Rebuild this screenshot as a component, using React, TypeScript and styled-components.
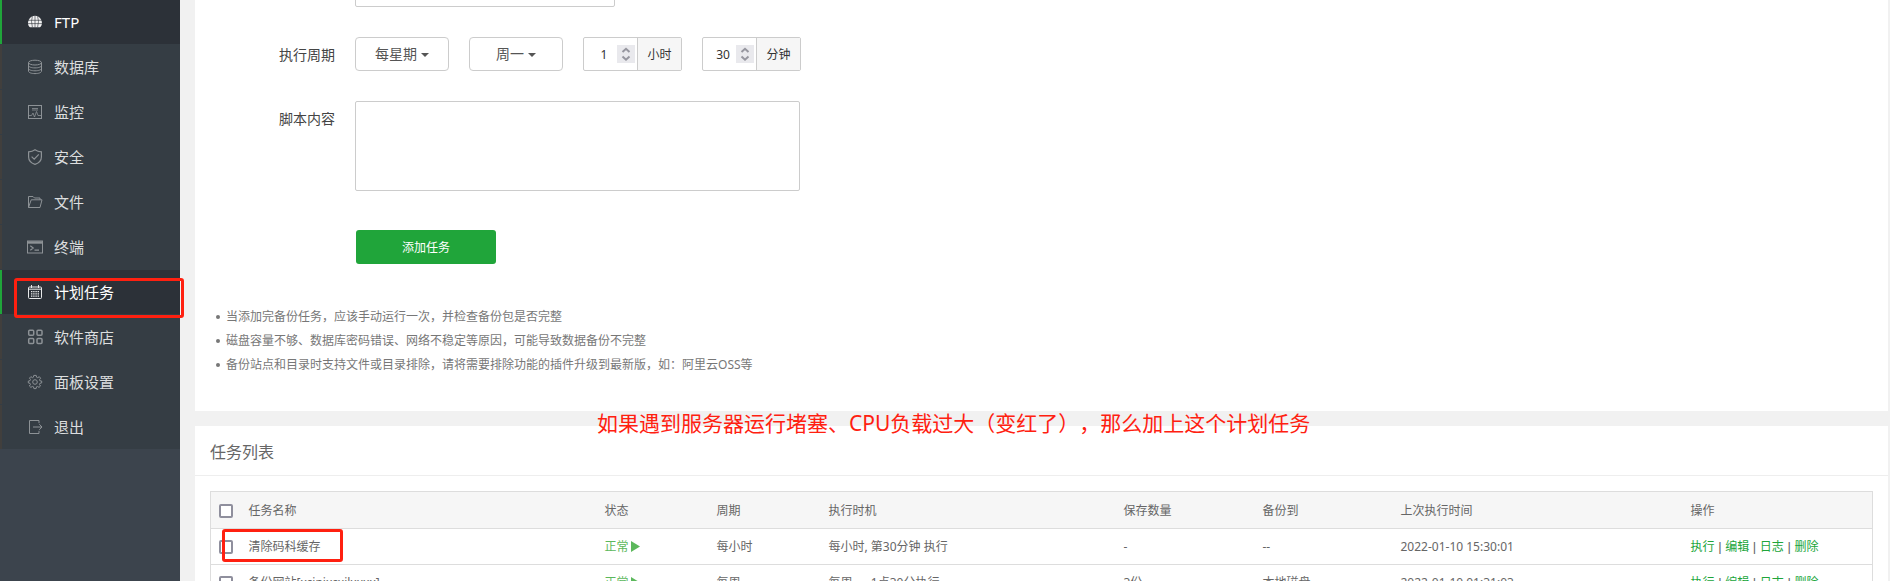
import React from "react";
import styled, { createGlobalStyle } from "styled-components";

const GlobalStyle = createGlobalStyle`
  * { box-sizing: border-box; }
  body {
    margin: 0;
    background: #f1f1f1;
    color: #666;
    font: 12px/18px "Noto Sans", "Noto Sans CJK SC", sans-serif;
    text-spacing-trim: space-all;
  }
  input, select, textarea, button { font: inherit; color: inherit; }
`;

const Layout = styled.div`
  display: flex;
  height: 100vh;
  overflow: hidden;
`;

const Sidebar = styled.aside`
  position: relative;
  z-index: 1;
  flex: 0 0 180px;
  background: #3c444d;
`;

const Nav = styled.nav`
  display: flex;
  flex-direction: column;
  gap: 1px;
  background: #353d44;
`;

const NavLink = styled.a<{ $active?: boolean }>`
  position: relative;
  display: flex;
  align-items: center;
  gap: 11px;
  height: 44px;
  padding-left: 25px;
  border-left: 2px solid ${(p) => (p.$active ? "#20a53a" : "#413f3d")};
  background: ${(p) => (p.$active ? "#2c3138" : "transparent")};
  color: ${(p) => (p.$active ? "#fff" : "#dcdedf")};
  font-size: 15px;
  line-height: 22px;
  text-decoration: none;
`;

const IconSvg = styled.svg<{ $bright?: boolean }>`
  flex: none;
  width: 16px;
  height: 16px;
  fill: none;
  stroke: ${(p) => (p.$bright ? "#e8e9ea" : "#8d9296")};
  stroke-width: 1;
`;

const Highlight = styled.span<{ $area: "nav" | "cell" }>`
  position: absolute;
  z-index: 2;
  top: ${(p) => (p.$area === "nav" ? 8 : 0)}px;
  left: ${(p) => (p.$area === "nav" ? 12 : -19)}px;
  width: ${(p) => (p.$area === "nav" ? 170 : 121)}px;
  height: ${(p) => (p.$area === "nav" ? 40 : 33)}px;
  border: 3px solid #ff2010;
  border-radius: 3px;
  pointer-events: none;
`;

const Main = styled.main`
  flex: 1;
  min-width: 0;
  display: flex;
  flex-direction: column;
  gap: 15px;
  padding: 0 2px 0 15px;
`;

const Panel = styled.section`
  position: relative;
  flex: none;
  background: #fff;
`;

const Form = styled.form`
  display: flex;
  flex-direction: column;
  gap: 30px;
  margin-top: -27px;
`;

const FormRow = styled.div`
  display: flex;
  align-items: flex-start;
  gap: 20px;
`;

const RowLabel = styled.label`
  width: 140px;
  color: #444;
  font-size: 14px;
  line-height: 36px;
  height: 34px;
  text-align: right;
`;

const TextInput = styled.input`
  width: 260px;
  height: 34px;
  padding: 0 10px;
  border: 1px solid #ccc;
  border-radius: 2px;
`;

const SelectBox = styled.label`
  display: flex;
  align-items: center;
  justify-content: center;
  gap: 4px;
  width: 94px;
  height: 34px;
  border: 1px solid #ccc;
  border-radius: 4px;
  background: #fff;
  color: #555;
`;

const Select = styled.select`
  appearance: none;
  field-sizing: content;
  padding: 0;
  border: 0;
  background: none;
  font-size: 14px;
  line-height: 20px;
`;

const Caret = styled.span`
  margin-top: 2px;
  border: 4px solid transparent;
  border-top-color: currentColor;
  border-bottom: 0;
`;

const NumberGroup = styled.label`
  display: flex;
  align-items: center;
  width: 99px;
  height: 34px;
  border: 1px solid #ccc;
  border-radius: 2px;
  color: #333;
`;

const NumberInput = styled.input`
  appearance: textfield;
  width: 33px;
  height: 32px;
  padding: 0 0 0 7px;
  border: 0;
  background: none;
  text-align: center;
  &::-webkit-inner-spin-button { display: none; }
`;

const Stepper = styled.svg`
  width: 18px;
  height: 18px;
  margin-right: 2px;
  background: #e9e9ed;
  fill: none;
  stroke: #96969f;
  stroke-width: 2;
`;

const Unit = styled.span`
  flex: 1;
  height: 32px;
  border-left: 1px solid #ccc;
  background: #f6f6f6;
  line-height: 34px;
  text-align: center;
`;

const ScriptArea = styled.textarea`
  display: block;
  width: 445px;
  height: 90px;
  padding: 8px 10px;
  border: 1px solid #ccc;
  border-radius: 2px;
  resize: none;
`;

const SubmitButton = styled.button`
  width: 140px;
  height: 34px;
  margin: 9px 0 0 161px;
  padding: 2px 0 0;
  border: 0;
  border-radius: 3px;
  background: #20a53a;
  color: #fff;
`;

const Tips = styled.ul`
  margin: 0;
  padding: 41px 0 34px 31px;
  color: #777;
  line-height: 24px;
  list-style: none;
`;

const Tip = styled.li`
  display: flex;
  align-items: center;
  &::before {
    content: "";
    width: 4px;
    height: 4px;
    margin: 0 6px 0 -10px;
    border-radius: 50%;
    background: #777;
  }
`;

const PanelTitle = styled.h2`
  margin: 0;
  padding: 14px 15px 11px;
  border-bottom: 1px solid #eee;
  font-size: 16px;
  font-weight: 400;
  line-height: 24px;
`;

const Annotation = styled.p`
  position: absolute;
  top: -17px;
  left: 402px;
  margin: 0;
  color: #ff2010;
  font-size: 21px;
  line-height: 28px;
  white-space: nowrap;
`;

const TableWrap = styled.div`
  padding: 15px;
`;

const Table = styled.table`
  width: 100%;
  table-layout: fixed;
  border-collapse: collapse;
  border: 1px solid #ddd;
`;

const Column = styled.col<{ $width?: number }>`
  width: ${(p) => (p.$width ? `${p.$width}px` : "auto")};
`;

const HeadCell = styled.th`
  height: 37px;
  padding: 2px 8px 0;
  background: #f6f6f6;
  font-weight: 400;
  text-align: left;
`;

const Cell = styled.td`
  position: relative;
  height: 36px;
  padding: 0 8px;
  border-top: 1px solid #ddd;
  white-space: nowrap;
`;

const CheckBox = styled.input`
  appearance: none;
  display: block;
  width: 14px;
  height: 14px;
  margin: 0;
  border: 2px solid #8f8f9d;
  border-radius: 2px;
  background: #fff;
`;

const Status = styled.span`
  display: flex;
  align-items: center;
  gap: 2px;
  color: #5cb85c;
`;

const PlayMark = styled.svg`
  width: 9px;
  height: 11px;
  fill: currentColor;
`;

const ActionLink = styled.a`
  color: #20a53a;
  text-decoration: none;
  & + &::before {
    content: " | ";
    color: #666;
    font-family: "Liberation Sans", sans-serif;
    font-size: 13px;
    white-space: pre;
  }
`;

const icons: Record<string, React.ReactNode> = {
  ftp: (
    <>
      <path d="M3 13.2C.4 11.4 .6 7.4 2.4 4.8C5 .6 11 .6 13.6 4.8C15.4 7.4 15.6 11.4 13 13.2Z" fill="#f0f0f1" stroke="none" />
      <path d="M1 6.3H15M1 9.6H15M8 1.5V13.2M5.4 2.3Q3.6 7 5.4 13.2M10.6 2.3Q12.4 7 10.6 13.2" stroke="#2c3138" strokeWidth="0.6" />
    </>
  ),
  database: (
    <>
      <ellipse cx="8" cy="3.6" rx="6.5" ry="2.4" />
      <path d="M1.5 3.6V12.2C1.5 13.6 4.4 14.6 8 14.6S14.5 13.6 14.5 12.2V3.6M1.5 6.5C1.5 7.9 4.4 8.9 8 8.9S14.5 7.9 14.5 6.5M1.5 9.4C1.5 10.8 4.4 11.8 8 11.8S14.5 10.8 14.5 9.4" />
    </>
  ),
  monitor: (
    <>
      <rect x="1.5" y="1.5" width="13" height="13" />
      <path d="M5 4.5H11M5 6H11M2 11.5H4.5L6 9L7.5 13L9.5 7.5L11 11.5H14" strokeWidth="0.8" />
    </>
  ),
  shield: <path d="M8 .8C6 2.3 4 2.8 1.6 2.8V8C1.6 11.6 4.4 14.2 8 15.4C11.6 14.2 14.4 11.6 14.4 8V2.8C12 2.8 10 2.3 8 .8ZM4.6 7.6L7.2 10.2L11.8 5.4" strokeWidth="1.2" />,
  folder: <path d="M1.5 13.5V2.5H6L7.5 4H13V5.8M1.5 13.5L4.2 5.8H15L13 13.5Z" />,
  terminal: (
    <>
      <rect x=".5" y="2" width="15" height="12" />
      <path d="M.5 3.5H15.5" strokeWidth="2.4" />
      <path d="M3.3 6.8L6.2 9L3.3 11.2M7.5 11.2H12" strokeWidth="1.2" />
    </>
  ),
  calendar: (
    <>
      <rect x="1.5" y="3" width="13" height="11.5" rx="1" />
      <path d="M1.5 5.2H14.5M4.5 1V4M11.5 1V4" />
      <path d="M4 7.7H12.2M4 9.9H12.2M4 12.1H12.2" strokeWidth="1.2" strokeDasharray="1.4 .8" />
    </>
  ),
  store: (
    <g strokeWidth="1.5">
      <rect x="1.7" y="1.2" width="5" height="5" rx="1" />
      <rect x="10" y="1.2" width="5" height="5" rx="1" />
      <rect x="1.7" y="9.5" width="5" height="5" rx="1" />
      <rect x="10" y="9.5" width="5" height="5" rx="1" />
    </g>
  ),
  settings: (
    <>
      <path d="M6.8 1.4H9.2L9.6 3.2L10.7 3.7L12.3 2.7L13.6 4.2L12.5 5.7L12.9 6.8L14.7 7.1V8.9L12.9 9.3L12.4 10.4L13.5 12L12 13.4L10.5 12.4L9.5 12.8L9.1 14.6H6.9L6.5 12.8L5.4 12.4L3.9 13.4L2.4 12L3.5 10.4L3 9.3L1.3 8.9V7.1L3 6.7L3.5 5.6L2.5 4.1L3.9 2.6L5.4 3.7L6.4 3.2Z" />
      <circle cx="8" cy="8" r="2.3" />
    </>
  ),
  exit: <path d="M12 4.2V1.5H2.5V14.5H12V11.8M6 8H15M12.3 5.2L15 8L12.3 10.8" />,
};

const navItems = [
  { icon: "ftp", label: "FTP", active: true },
  { icon: "database", label: "数据库" },
  { icon: "monitor", label: "监控" },
  { icon: "shield", label: "安全" },
  { icon: "folder", label: "文件" },
  { icon: "terminal", label: "终端" },
  { icon: "calendar", label: "计划任务", active: true, marked: true },
  { icon: "store", label: "软件商店" },
  { icon: "settings", label: "面板设置" },
  { icon: "exit", label: "退出" },
];

const tips = [
  "当添加完备份任务，应该手动运行一次，并检查备份包是否完整",
  "磁盘容量不够、数据库密码错误、网络不稳定等原因，可能导致数据备份不完整",
  "备份站点和目录时支持文件或目录排除，请将需要排除功能的插件升级到最新版，如：阿里云OSS等",
];

const columns: { title: string; width?: number }[] = [
  { title: "任务名称" },
  { title: "状态", width: 112 },
  { title: "周期", width: 112 },
  { title: "执行时机", width: 295 },
  { title: "保存数量", width: 139 },
  { title: "备份到", width: 138 },
  { title: "上次执行时间", width: 290 },
  { title: "操作", width: 190 },
];

const tasks = [
  { name: "清除码科缓存", cycle: "每小时", timing: "每小时, 第30分钟 执行", keep: "-", target: "--", last: "2022-01-10 15:30:01", marked: true },
  { name: "备份网站[xcinixcxilxxxx]", cycle: "每周", timing: "每周一, 1点30分执行", keep: "3份", target: "本地磁盘", last: "2022-01-10 01:31:03" },
];

const actions = ["执行", "编辑", "日志", "删除"];

function NumberField({ value, unit }: { value: number; unit: string }) {
  return (
    <NumberGroup>
      <NumberInput type="number" defaultValue={value} />
      <Stepper viewBox="0 0 18 18" aria-hidden="true">
        <path d="M5.5 7L9 3.8L12.5 7M5.5 11.5L9 14.7L12.5 11.5" />
      </Stepper>
      <Unit>{unit}</Unit>
    </NumberGroup>
  );
}

function DropDown({ options, label, id }: { options: string[]; label: string; id?: string }) {
  return (
    <SelectBox>
      <Select id={id} aria-label={label}>
        {options.map((o) => (
          <option key={o}>{o}</option>
        ))}
      </Select>
      <Caret />
    </SelectBox>
  );
}

export default function App() {
  return (
    <>
      <GlobalStyle />
      <Layout>
        <Sidebar>
          <Nav>
            {navItems.map((item) => (
              <NavLink key={item.label} href="#" $active={item.active}>
                <IconSvg viewBox="0 0 16 16" $bright={item.active} aria-hidden="true">
                  {icons[item.icon]}
                </IconSvg>
                {item.label}
                {item.marked && <Highlight $area="nav" />}
              </NavLink>
            ))}
          </Nav>
        </Sidebar>
        <Main>
          <Panel>
            <Form onSubmit={(e) => e.preventDefault()}>
              <FormRow>
                <RowLabel htmlFor="task-name" />
                <TextInput id="task-name" aria-label="任务名称" />
              </FormRow>
              <FormRow>
                <RowLabel htmlFor="cycle">执行周期</RowLabel>
                <DropDown id="cycle" label="执行周期" options={["每星期", "每天", "每小时"]} />
                <DropDown label="星期" options={["周一", "周二", "周三"]} />
                <NumberField value={1} unit="小时" />
                <NumberField value={30} unit="分钟" />
              </FormRow>
              <FormRow>
                <RowLabel htmlFor="script">脚本内容</RowLabel>
                <ScriptArea id="script" />
              </FormRow>
              <SubmitButton type="submit">添加任务</SubmitButton>
            </Form>
            <Tips>
              {tips.map((tip) => (
                <Tip key={tip}>{tip}</Tip>
              ))}
            </Tips>
          </Panel>
          <Panel>
            <PanelTitle>任务列表</PanelTitle>
            <Annotation>如果遇到服务器运行堵塞、CPU负载过大（变红了），那么加上这个计划任务</Annotation>
            <TableWrap>
              <Table>
                <colgroup>
                  <Column $width={30} />
                  {columns.map((c) => (
                    <Column key={c.title} $width={c.width} />
                  ))}
                </colgroup>
                <thead>
                  <tr>
                    <HeadCell>
                      <CheckBox type="checkbox" aria-label="全选" />
                    </HeadCell>
                    {columns.map((c) => (
                      <HeadCell key={c.title}>{c.title}</HeadCell>
                    ))}
                  </tr>
                </thead>
                <tbody>
                  {tasks.map((t) => (
                    <tr key={t.name}>
                      <Cell>
                        <CheckBox type="checkbox" aria-label={t.name} />
                      </Cell>
                      <Cell>
                        {t.name}
                        {t.marked && <Highlight $area="cell" />}
                      </Cell>
                      <Cell>
                        <Status>
                          正常
                          <PlayMark viewBox="0 0 9 11" aria-hidden="true">
                            <path d="M0 0L9 5.5L0 11Z" />
                          </PlayMark>
                        </Status>
                      </Cell>
                      <Cell>{t.cycle}</Cell>
                      <Cell>{t.timing}</Cell>
                      <Cell>{t.keep}</Cell>
                      <Cell>{t.target}</Cell>
                      <Cell>{t.last}</Cell>
                      <Cell>
                        {actions.map((a) => (
                          <ActionLink key={a} href="#">
                            {a}
                          </ActionLink>
                        ))}
                      </Cell>
                    </tr>
                  ))}
                </tbody>
              </Table>
            </TableWrap>
          </Panel>
        </Main>
      </Layout>
    </>
  );
}
